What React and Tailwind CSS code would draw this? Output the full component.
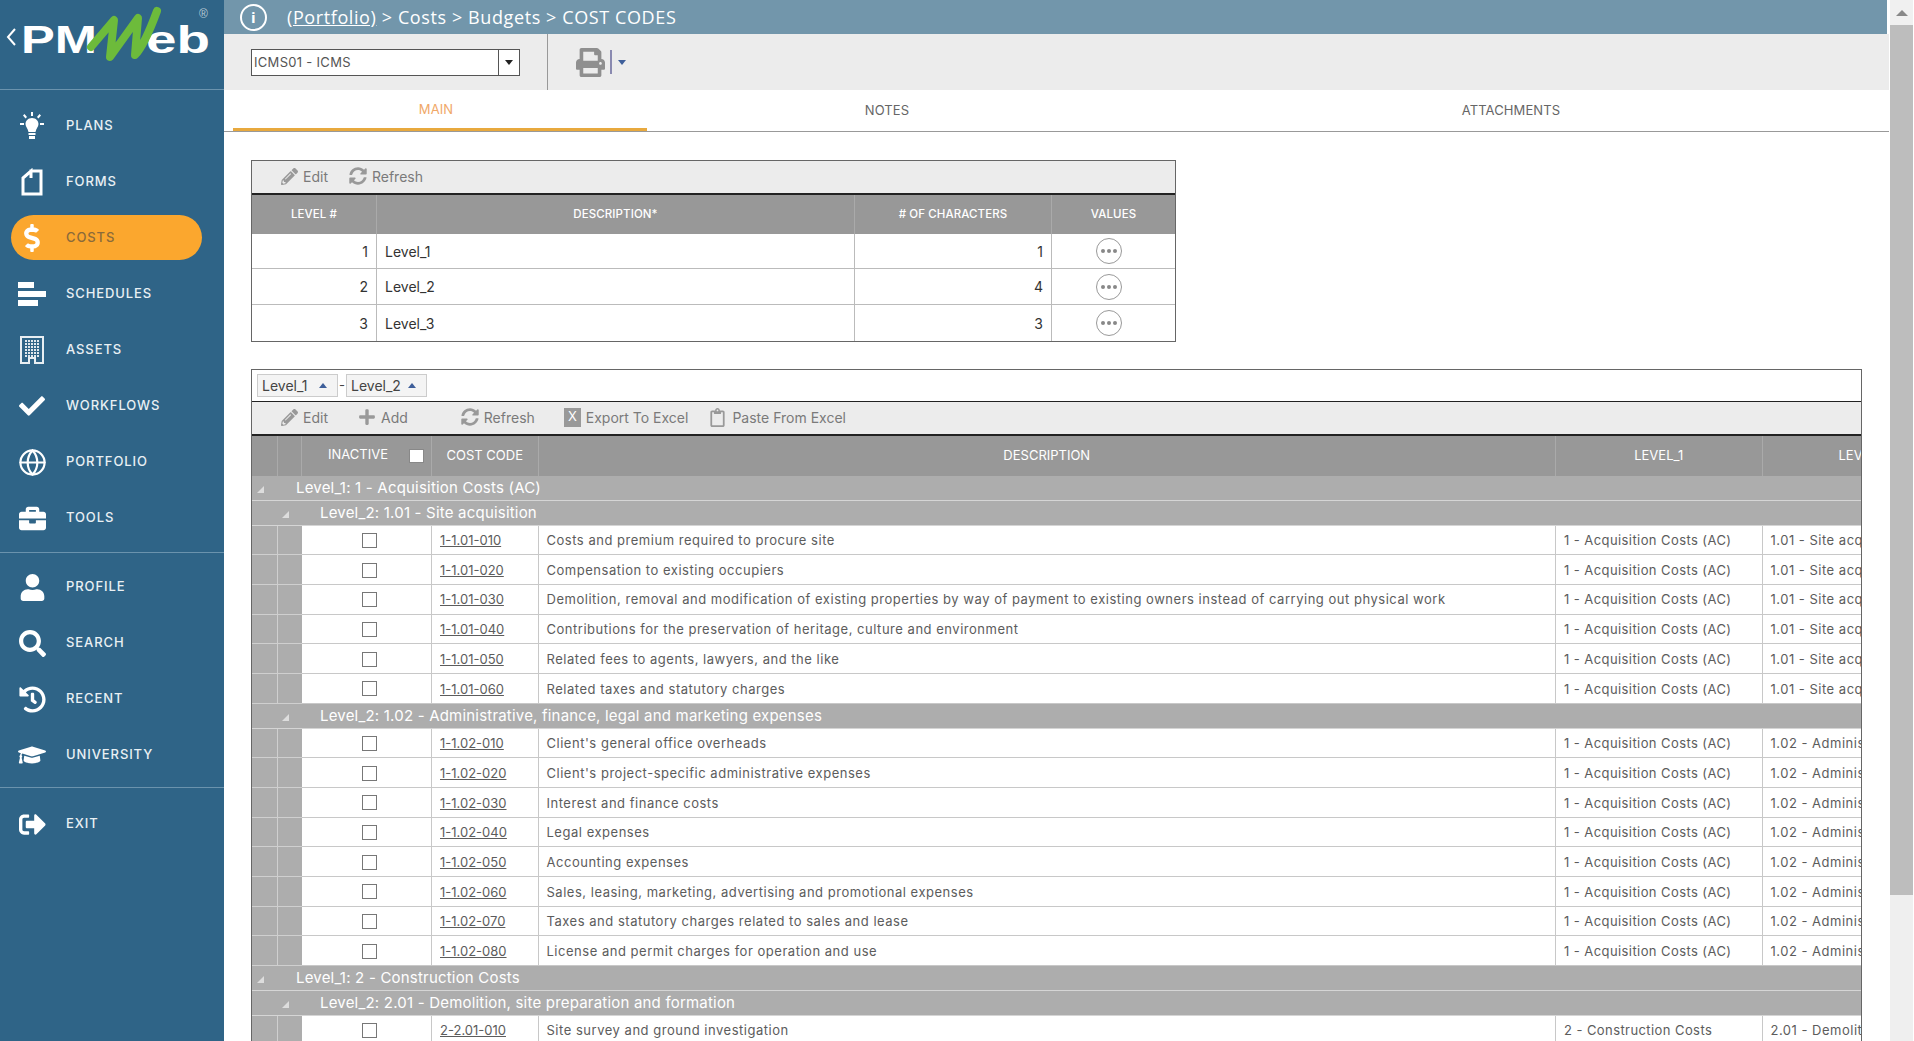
import React from 'react';
import { Globe } from 'lucide-react';
import {
  FaCheck, FaBriefcase, FaUser, FaSearch, FaHistory, FaGraduationCap, FaDollarSign,
  FaPencilAlt, FaPlus, FaSyncAlt, FaPrint, FaRegClipboard, FaSignOutAlt,
} from 'react-icons/fa';

const BulbIcon = () => (
  <svg width="30" height="30" viewBox="0 0 30 30" fill="white">
    <path d="M15 7c-4 0-6.500 3-6.500 6 0 3 2.500 4.500 3 8h7c.5-3.500 3-5 3-8 0-3-2.500-6-6.500-6z" />
    <rect x="11.500" y="22" width="7" height="2" />
    <rect x="12" y="25" width="6" height="3" />
    <path d="M14 1h2v4h-2zM3 12h4v2H3zM23 12h4v2h-4zM6 4.500l1.500-1.500 2.500 3-1.500 1.500zM24 4.500L22.500 3 20 6l1.500 1.500z" />
  </svg>
);

const FormIcon = () => (
  <svg width="22" height="28" viewBox="0 0 22 28" fill="none" stroke="white" strokeWidth="3">
    <path d="M2 26V10l8-7v7h0V3h10v23z" />
  </svg>
);

const ScheduleIcon = () => (
  <svg width="28" height="24" viewBox="0 0 28 24" fill="white">
    <rect x="0" y="0" width="16" height="6" />
    <rect x="0" y="9" width="28" height="6" />
    <rect x="0" y="18" width="20" height="6" />
  </svg>
);

const AssetIcon = () => (
  <svg width="24" height="28" viewBox="0 0 24 28">
    <path d="M1 1h22v26h-8v-5H9v5H1z" fill="none" stroke="#e8eef2" strokeWidth="2" />
    <g fill="#dfe7ec">
      {[5, 8, 11, 14, 17].map((x) => [4, 7, 10, 13, 16, 19].map((y) => (
        <rect key={`${x}-${y}`} x={x} y={y} width="2" height="2" />
      )))}
    </g>
  </svg>
);

const navTop = [
  { label: 'PLANS', icon: <BulbIcon /> },
  { label: 'FORMS', icon: <FormIcon /> },
  { label: 'COSTS', icon: <FaDollarSign size={28} color="white" />, active: true },
  { label: 'SCHEDULES', icon: <ScheduleIcon /> },
  { label: 'ASSETS', icon: <AssetIcon /> },
  { label: 'WORKFLOWS', icon: <FaCheck size={26} color="white" /> },
  { label: 'PORTFOLIO', icon: <Globe size={29} color="white" strokeWidth={1.800} /> },
  { label: 'TOOLS', icon: <FaBriefcase size={27} color="white" /> },
];
const navMid = [
  { label: 'PROFILE', icon: <FaUser size={27} color="white" /> },
  { label: 'SEARCH', icon: <FaSearch size={27} color="white" /> },
  { label: 'RECENT', icon: <FaHistory size={27} color="white" /> },
  { label: 'UNIVERSITY', icon: <FaGraduationCap size={28} color="white" /> },
];

const NavItem = ({ item }) => (
  <div className="relative flex h-14 items-center">
    {item.active && <div className="absolute left-[11px] top-[5px] h-[45px] w-[191px] rounded-full bg-[#fba72e]" />}
    <div className="relative flex w-[66px] justify-center pr-[2px]">{item.icon}</div>
    <span className={`relative text-[13px] font-medium tracking-[0.9px] ${item.active ? 'text-[#8a6a3a]' : 'text-[#e9f0f4]'}`}>{item.label}</span>
  </div>
);

const Logo = () => (
  <svg width="224" height="90" viewBox="0 0 224 90" fontFamily="Liberation Sans, sans-serif" fontWeight="700" fill="white">
    <path d="M15 29l-7 8 7 8" fill="none" stroke="white" strokeWidth="2" />
    <text x="21" y="53" fontSize="38" textLength="76" lengthAdjust="spacingAndGlyphs">PM</text>
    <text x="146" y="53" fontSize="38" textLength="64" lengthAdjust="spacingAndGlyphs">eb</text>
    <path d="M91 47L114 20 110 57 138 18 135 55C143 47 150 30 157 11" fill="none" stroke="#6dbb3b" strokeWidth="8" strokeLinejoin="round" strokeLinecap="round" />
    <text x="199" y="18" fontSize="12" fontWeight="400" fill="#b7c9d5">®</text>
  </svg>
);

const Sidebar = () => (
  <aside className="flex h-full w-56 shrink-0 flex-col bg-[#2f6487] font-[Inter]">
    <div className="h-[90px] border-b border-[#6b93ad]"><Logo /></div>
    <nav className="flex flex-col pt-[8px]">
      {navTop.map((item) => <NavItem key={item.label} item={item} />)}
    </nav>
    <div className="mt-[6px] border-t border-[#6b93ad] pt-[6px]">
      {navMid.map((item) => <NavItem key={item.label} item={item} />)}
    </div>
    <div className="mt-[4px] border-t border-[#6b93ad] pt-[8px]">
      <NavItem item={{ label: 'EXIT', icon: <FaSignOutAlt size={27} color="white" /> }} />
    </div>
  </aside>
);

const ToolButton = ({ icon, label, className }) => (
  <div className={`flex items-center gap-[5px] text-[14px] text-[#7a7a7a] ${className}`}>
    {icon}
    <span>{label}</span>
  </div>
);

const levels = [
  { no: 1, name: 'Level_1', chars: 1, height: 'h-[35px]' },
  { no: 2, name: 'Level_2', chars: 4, height: 'h-[36px]' },
  { no: 3, name: 'Level_3', chars: 3, height: 'h-[36px]' },
];

const LevelsGrid = () => (
  <div className="w-[925px] border border-[#666] text-[14px]">
    <div className="flex h-[34px] items-center border-b-2 border-[#222] bg-[#ececec] pb-[2px]">
      <ToolButton className="ml-[29px]" icon={<FaPencilAlt size={17} color="#999" />} label="Edit" />
      <ToolButton className="ml-[21px]" icon={<FaSyncAlt size={18} color="#999" />} label="Refresh" />
    </div>
    <div className="grid h-[39px] grid-cols-[125px_478px_197px_1fr] bg-[#989898] text-center text-[11.500px] font-medium tracking-[0.1px] text-white">
      <div className="flex items-center justify-center border-r border-[#aaa]">LEVEL #</div>
      <div className="flex items-center justify-center border-r border-[#aaa]">DESCRIPTION*</div>
      <div className="flex items-center justify-center border-r border-[#aaa]">
        # OF CHARACTERS
      </div>
      <div className="flex items-center justify-center">VALUES</div>
    </div>
    {levels.map((row, i) => (
      <div key={row.no} className={`grid grid-cols-[125px_478px_197px_1fr] text-[#333] ${row.height} ${i < 2 ? 'border-b border-[#bbb]' : ''}`}>
        <div className="flex items-center justify-end border-r border-[#bbb] pr-2">{row.no}</div>
        <div className="flex items-center border-r border-[#bbb] pl-2">{row.name}</div>
        <div className="flex items-center justify-end border-r border-[#bbb] pr-2">{row.chars}</div>
        <div className="flex items-center justify-center pr-[9px]">
          <div className="flex h-[26px] w-[26px] items-center justify-center gap-[2px] rounded-full border-[1.500px] border-[#999]">
            <span className="h-1 w-1 rounded-full bg-[#888]" />
            <span className="h-1 w-1 rounded-full bg-[#888]" />
            <span className="h-1 w-1 rounded-full bg-[#888]" />
          </div>
        </div>
      </div>
    ))}
  </div>
);

const ac = '1 - Acquisition Costs (AC)';
const site = '1.01 - Site acquisition';
const admin = '1.02 - Administrative, finance, legal and marketing expenses';
const demo = '2.01 - Demolition, site preparation and formation';

const rows = [
  { group: 1, label: 'Level_1: 1 - Acquisition Costs (AC)' },
  { group: 2, label: 'Level_2: 1.01 - Site acquisition' },
  { code: '1-1.01-010', desc: 'Costs and premium required to procure site', l1: ac, l2: site },
  { code: '1-1.01-020', desc: 'Compensation to existing occupiers', l1: ac, l2: site },
  { code: '1-1.01-030', desc: 'Demolition, removal and modification of existing properties by way of payment to existing owners instead of carrying out physical work', l1: ac, l2: site },
  { code: '1-1.01-040', desc: 'Contributions for the preservation of heritage, culture and environment', l1: ac, l2: site },
  { code: '1-1.01-050', desc: 'Related fees to agents, lawyers, and the like', l1: ac, l2: site },
  { code: '1-1.01-060', desc: 'Related taxes and statutory charges', l1: ac, l2: site },
  { group: 2, label: 'Level_2: 1.02 - Administrative, finance, legal and marketing expenses' },
  { code: '1-1.02-010', desc: "Client's general office overheads", l1: ac, l2: admin },
  { code: '1-1.02-020', desc: "Client's project-specific administrative expenses", l1: ac, l2: admin },
  { code: '1-1.02-030', desc: 'Interest and finance costs', l1: ac, l2: admin },
  { code: '1-1.02-040', desc: 'Legal expenses', l1: ac, l2: admin },
  { code: '1-1.02-050', desc: 'Accounting expenses', l1: ac, l2: admin },
  { code: '1-1.02-060', desc: 'Sales, leasing, marketing, advertising and promotional expenses', l1: ac, l2: admin },
  { code: '1-1.02-070', desc: 'Taxes and statutory charges related to sales and lease', l1: ac, l2: admin },
  { code: '1-1.02-080', desc: 'License and permit charges for operation and use', l1: ac, l2: admin },
  { group: 1, label: 'Level_1: 2 - Construction Costs' },
  { group: 2, label: 'Level_2: 2.01 - Demolition, site preparation and formation' },
  { code: '2-2.01-010', desc: 'Site survey and ground investigation', l1: '2 - Construction Costs', l2: demo },
];

const Chip = ({ label }) => (
  <div className="flex h-[23px] w-[81px] items-center justify-between border border-[#ccc] bg-[#f4f4f4] pl-1 pr-[10px] text-[14px] text-[#444]">
    <span>{label}</span>
    <span className="h-0 w-0 border-x-[4px] border-b-[5px] border-x-transparent border-b-[#3f5f9a]" />
  </div>
);

const GroupRow = ({ row }) => (
  <div className={`relative flex items-center border-b border-[#d5d5d5] bg-[#adadad] pt-[1px] text-[15px] tracking-[0.2px] text-white ${row.group === 1 ? 'h-[24.500px] pl-[44px]' : 'h-[25px] pl-[68px]'}`}>
    <span className={`absolute top-[10px] h-0 w-0 border-b-[7px] border-l-[7px] border-b-[#ddd] border-l-transparent ${row.group === 1 ? 'left-[5px]' : 'left-[30px]'}`} />
    {row.label}
  </div>
);

const DataRow = ({ row }) => (
  <div className="grid h-[29.700px] grid-cols-[26px_24px_130px_106.500px_1017.500px_206.500px_1fr] text-[13px] text-[#5c5c5c]">
    <div className="border-b border-r border-[#cfcfcf] bg-[#adadad]" />
    <div className="border-b border-[#cfcfcf] bg-[#adadad]" />
    <div className="flex items-center justify-center border-b border-r border-[#c8c8c8] pl-[5px] pt-[1px]">
      <span className="h-[15px] w-[15px] border border-[#777] bg-white" />
    </div>
    <div className="flex items-center border-b border-r border-[#c8c8c8] pl-2 pt-[2px] underline">{row.code}</div>
    <div className="flex items-center border-b border-r border-[#c8c8c8] pl-2 pt-[2px] tracking-[0.52px] whitespace-nowrap">{row.desc}</div>
    <div className="flex items-center border-b border-r border-[#c8c8c8] pl-2 pt-[2px] tracking-[0.42px] whitespace-nowrap">{row.l1}</div>
    <div className="flex items-center overflow-hidden border-b border-[#c8c8c8] pl-2 pt-[2px] tracking-[0.5px] whitespace-nowrap">{row.l2}</div>
  </div>
);

const CodesGrid = () => (
  <div className="mt-[27px] w-[1611px] border-x border-t border-[#666]">
    <div className="flex h-[32px] items-center border-b border-[#222] pl-[5px] text-[#444]">
      <Chip label="Level_1" />
      <span className="mx-[1px] text-[13px]">-</span>
      <Chip label="Level_2" />
    </div>
    <div className="flex h-[34px] items-center border-b-2 border-[#222] bg-[#ececec] pb-[2px]">
      <ToolButton className="ml-[29px]" icon={<FaPencilAlt size={17} color="#999" />} label="Edit" />
      <ToolButton className="ml-[30px]" icon={<FaPlus size={18} color="#999" />} label="Add" />
      <ToolButton className="ml-[53px]" icon={<FaSyncAlt size={18} color="#999" />} label="Refresh" />
      <ToolButton
        className="ml-[29px]"
        icon={<span className="flex h-[19px] w-[17px] items-center justify-center bg-[#999] text-[13px] text-white">X</span>}
        label="Export To Excel"
      />
      <ToolButton className="ml-[20px]" icon={<FaRegClipboard size={19} color="#999" />} label="Paste From Excel" />
    </div>
    <div className="grid h-[40px] grid-cols-[26px_24px_130px_106.500px_1017.500px_206.500px_1fr] bg-[#989898] text-[13px] text-white">
      <div className="border-r border-[#aaa]" />
      <div className="border-r border-[#aaa]" />
      <div className="relative flex items-center border-r border-[#aaa] pb-[2px] pl-[26px]">
        <span>INACTIVE</span>
        <span className="absolute left-[107px] top-[13px] h-[14px] w-[15px] border border-[#888] bg-white" />
      </div>
      <div className="flex items-center justify-center border-r border-[#aaa]">COST CODE</div>
      <div className="flex items-center justify-center border-r border-[#aaa]">DESCRIPTION</div>
      <div className="flex items-center justify-center border-r border-[#aaa]">LEVEL_1</div>
      <div className="flex items-center overflow-hidden pl-[76px]">LEVEL_2</div>
    </div>
    {rows.map((row, i) => (row.group ? <GroupRow key={i} row={row} /> : <DataRow key={row.code} row={row} />))}
  </div>
);

const App = () => (
  <div className="flex h-screen w-full overflow-hidden bg-white font-[Inter]">
    <Sidebar />
    <main className="flex h-full min-w-0 flex-1 flex-col overflow-hidden">
      <div className="mr-[2px] flex h-[34px] shrink-0 items-center bg-[#7296ab] pl-4 font-['Open_Sans'] text-[18px] tracking-[0.6px] text-white">
        <span className="flex h-[27px] w-[27px] items-center justify-center rounded-full border-2 border-white text-[15px] font-bold">i</span>
        <span className="ml-[20px]"><span className="underline">(Portfolio)</span> &gt; Costs &gt; Budgets &gt; COST CODES</span>
      </div>
      <div className="flex h-[56px] shrink-0 items-center bg-[#ececec]">
        <div className="ml-[27px] flex h-[27px] w-[269px] items-center border border-[#555] bg-white">
          <span className="flex-1 pl-[2px] pt-[1px] text-[13px] tracking-[0.3px] text-[#555]">ICMS01 - ICMS</span>
          <span className="flex h-full w-[21px] items-center justify-center border-l border-[#555]">
            <span className="h-0 w-0 border-x-[4px] border-t-[5px] border-x-transparent border-t-[#222]" />
          </span>
        </div>
        <div className="ml-[27px] h-full border-l border-[#999]" />
        <FaPrint className="ml-[28px]" size={29} color="#8f8f8f" />
        <div className="ml-[5px] h-[24px] border-l-2 border-[#8a8ab0]" />
        <span className="ml-[6px] h-0 w-0 border-x-[4px] border-t-[5px] border-x-transparent border-t-[#3f5f9a]" />
      </div>
      <div className="flex h-[42px] shrink-0 items-end overflow-hidden border-b border-[#999] text-[13px] tracking-[0.1px] text-[#666]">
        <div className="ml-[9px] flex h-[42px] w-[414px] shrink-0 items-center justify-center border-b-[3px] border-[#e8a93e] pr-[8px] pt-[3px] text-[#f0a868]">MAIN</div>
        <div className="flex h-[42px] w-[480px] shrink-0 items-center justify-center pt-[1px]">NOTES</div>
        <div className="flex h-[42px] w-[768px] shrink-0 items-center justify-center pt-[1px]">ATTACHMENTS</div>
      </div>
      <div className="min-h-0 flex-1 overflow-hidden pl-[27px] pt-[28px]">
        <LevelsGrid />
        <CodesGrid />
      </div>
    </main>
    <div className="flex h-full w-[25px] shrink-0 flex-col bg-white pl-[1px] pr-[1px]">
      <div className="flex h-[25px] justify-center bg-[#f0f0f0] pt-[10px]">
        <span className="h-0 w-0 border-x-[6px] border-b-[6px] border-x-transparent border-b-[#888]" />
      </div>
      <div className="h-[870px] bg-[#bdbdbd]" />
      <div className="flex-1 bg-[#efefef]" />
    </div>
  </div>
);

export default App;
